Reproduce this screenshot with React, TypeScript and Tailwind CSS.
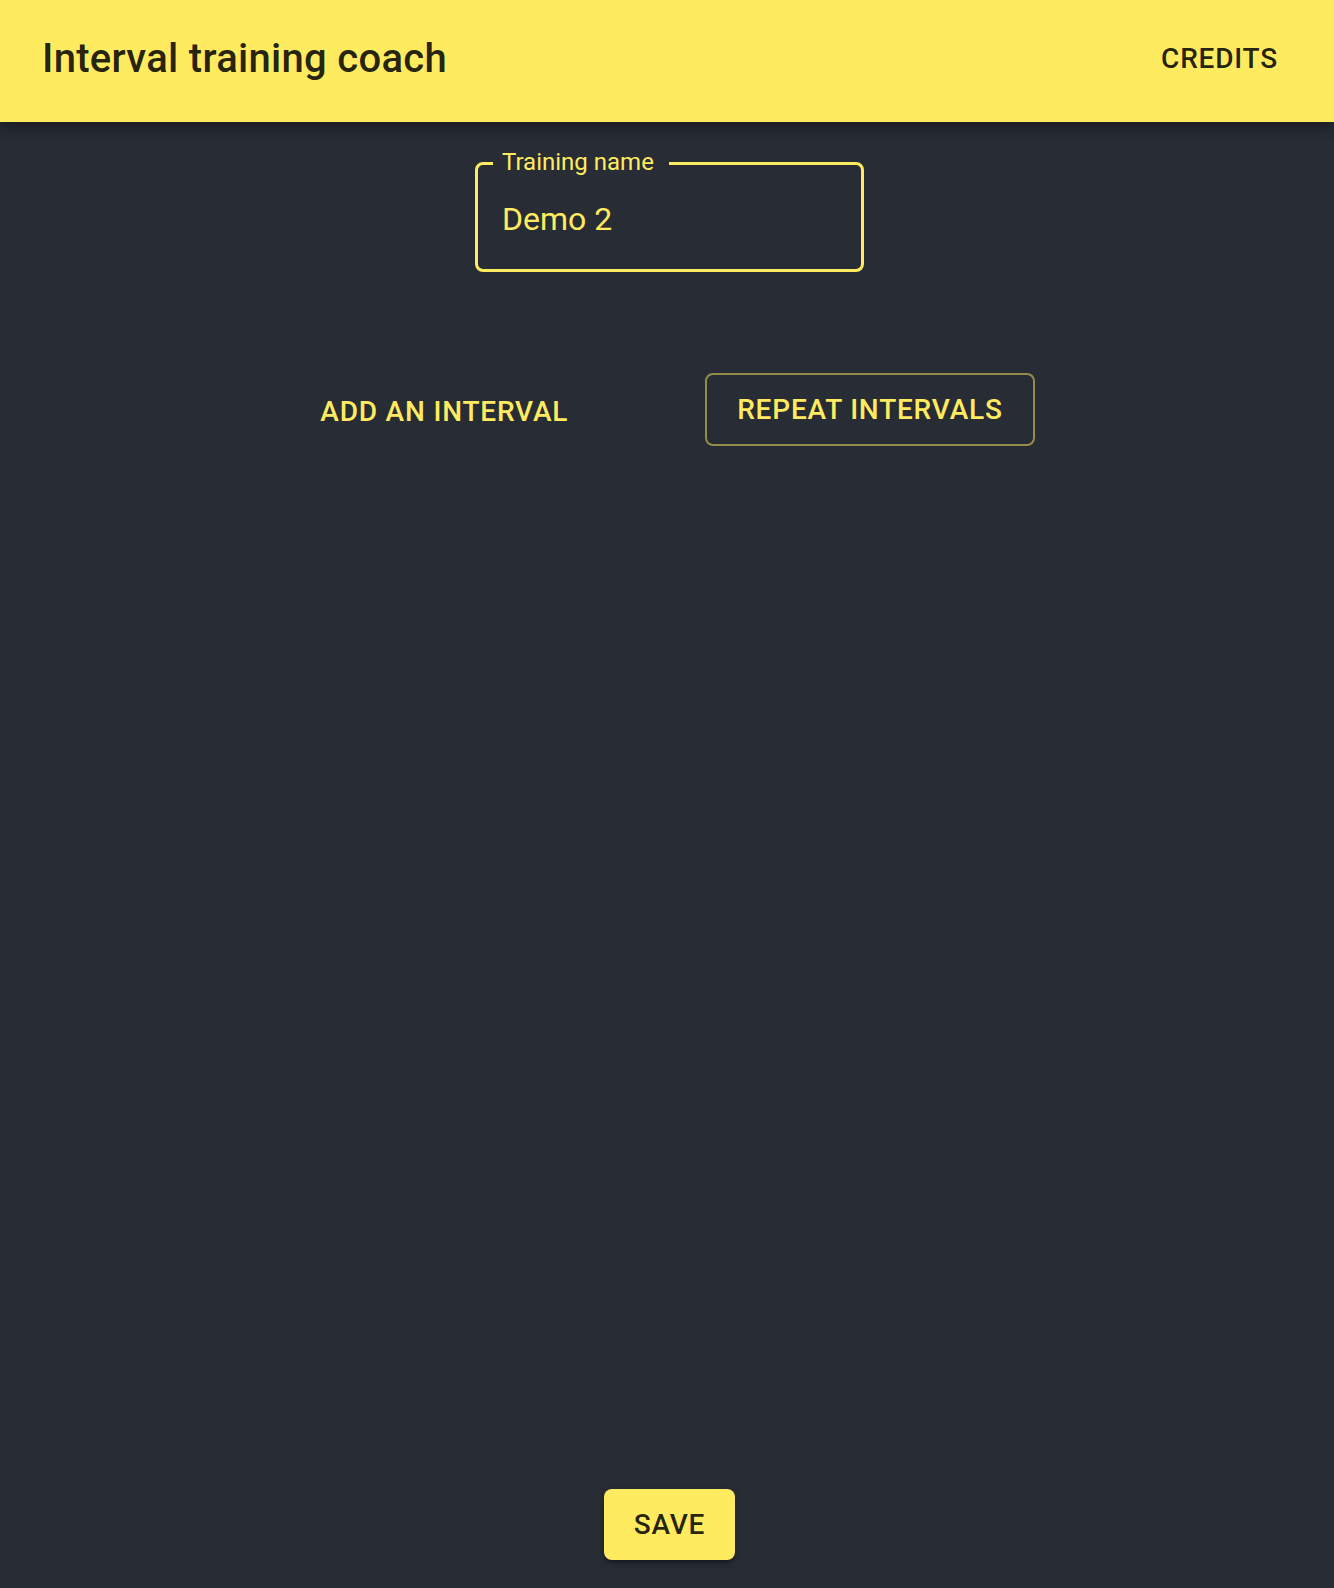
import React from "react";

export default function App() {
  return (
    <div className="min-h-screen bg-[#282c34] flex flex-col font-['Roboto','Liberation_Sans',sans-serif]">
      <header className="relative z-10 h-[122px] bg-[#ffeb60] flex items-center justify-between pl-[42px] pr-[40px] pb-[4px] shadow-[0px_4px_8px_-2px_rgba(0,0,0,0.2),0px_8px_10px_0px_rgba(0,0,0,0.14),0px_2px_20px_0px_rgba(0,0,0,0.12)]">
        <h1 className="text-[40px] font-medium leading-[1.6] tracking-[0.0075em] text-[rgba(0,0,0,0.87)]">
          Interval training coach
        </h1>
        <button className="text-[28px] font-medium leading-[1.75] tracking-[0.02857em] px-[16px] py-[12px] mb-[2px] text-[rgba(0,0,0,0.87)]">
          CREDITS
        </button>
      </header>

      <main className="flex-1 flex flex-col items-center pl-[5px]">
        <div className="relative mt-[40px] w-[389px] h-[110px] border-[3px] border-[#ffeb60] rounded-[8px] flex items-center pl-[24px] pt-[4px]">
          <span className="absolute left-[15px] top-[-19px] bg-[#282c34] pl-[9px] pr-[15px] text-[24px] leading-[1.4] text-[#ffeb60]">
            Training name
          </span>
          <span className="text-[32px] leading-[1.4375] text-[#ffeb60]">Demo 2</span>
        </div>

        <div className="mt-[99px] flex items-center gap-[121px]">
          <button className="mt-[4px] text-[28px] font-medium leading-[1.75] tracking-[0.02857em] px-[16px] py-[12px] text-[#ffeb60]">
            ADD AN INTERVAL
          </button>
          <button className="text-[28px] font-medium leading-[1.75] tracking-[0.02857em] px-[30px] py-[10px] border-2 border-[#ffeb60]/50 rounded-[8px] text-[#ffeb60]">
            REPEAT INTERVALS
          </button>
        </div>

        <button className="mt-auto mb-[28px] bg-[#ffeb60] rounded-[8px] px-[30px] py-[11px] text-[28px] font-medium leading-[1.75] tracking-[0.02857em] text-[rgba(0,0,0,0.87)] shadow-[0px_6px_2px_-4px_rgba(0,0,0,0.2),0px_4px_4px_0px_rgba(0,0,0,0.14),0px_2px_10px_0px_rgba(0,0,0,0.12)]">
          SAVE
        </button>
      </main>
    </div>
  );
}
